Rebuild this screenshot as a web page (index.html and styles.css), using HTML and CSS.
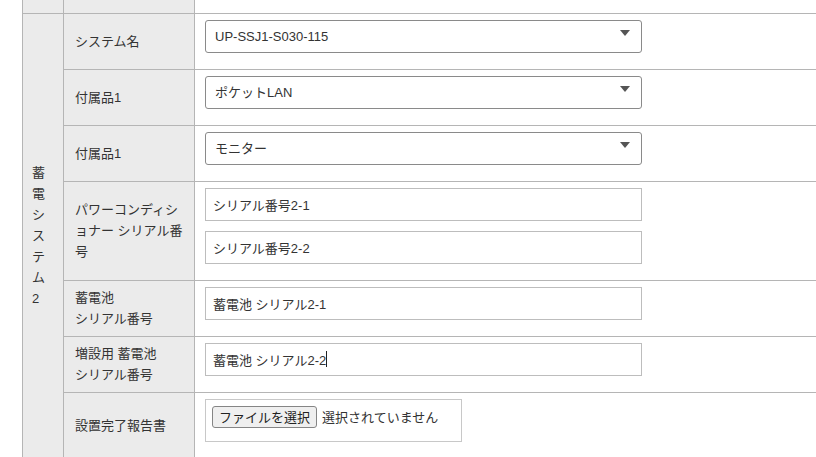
FILE: index.html
```html
<!DOCTYPE html>
<html lang="ja">
<head>
<meta charset="utf-8">
<title>蓄電システム2</title>
<link rel="stylesheet" href="styles.css">
</head>
<body>
<table class="form-table">
  <colgroup>
    <col class="c-group">
    <col class="c-label">
    <col class="c-field">
  </colgroup>
  <tbody>
    <tr class="row-top">
      <th class="group"></th>
      <th class="label"></th>
      <td class="field"></td>
    </tr>
    <tr>
      <th class="group" rowspan="7"><span class="vtext">蓄電システム2</span></th>
      <th class="label">システム名</th>
      <td class="field">
        <div class="select-wrap">
          <select class="select"><option>UP-SSJ1-S030-115</option></select>
          <span class="arrow"></span>
        </div>
      </td>
    </tr>
    <tr>
      <th class="label">付属品1</th>
      <td class="field">
        <div class="select-wrap">
          <select class="select"><option>ポケットLAN</option></select>
          <span class="arrow"></span>
        </div>
      </td>
    </tr>
    <tr>
      <th class="label">付属品1</th>
      <td class="field">
        <div class="select-wrap">
          <select class="select"><option>モニター</option></select>
          <span class="arrow"></span>
        </div>
      </td>
    </tr>
    <tr>
      <th class="label">パワーコンディショナー シリアル番号</th>
      <td class="field">
        <input class="text" type="text" value="シリアル番号2-1">
        <input class="text" type="text" value="シリアル番号2-2">
      </td>
    </tr>
    <tr>
      <th class="label">蓄電池<br>シリアル番号</th>
      <td class="field">
        <input class="text" type="text" value="蓄電池 シリアル2-1">
      </td>
    </tr>
    <tr>
      <th class="label">増設用 蓄電池<br>シリアル番号</th>
      <td class="field">
        <div class="text caret-box"><span>蓄電池 シリアル2-2</span><span class="caret"></span></div>
      </td>
    </tr>
    <tr>
      <th class="label">設置完了報告書</th>
      <td class="field">
        <div class="file-box">
          <button class="file-btn" type="button">ファイルを選択</button>
          <span class="file-name">選択されていません</span>
        </div>
      </td>
    </tr>
  </tbody>
</table>
</body>
</html>
```
FILE: styles.css
```css
html, body {
  margin: 0;
  padding: 0;
  background: #ffffff;
  overflow: hidden;
}
body {
  font-family: "Liberation Sans", "Noto Sans CJK JP", sans-serif;
  font-size: 13px;
  color: #333333;
}
.form-table {
  margin-left: 22px;
  border-collapse: collapse;
  table-layout: fixed;
  width: 830px;
}
.c-group { width: 41px; }
.c-label { width: 131px; }
.form-table th,
.form-table td {
  border: 1px solid #b5b5b5;
  padding: 6px 11px 6px 11px;
  text-align: left;
  font-weight: normal;
  vertical-align: middle;
}
.row-top th,
.row-top td {
  border-top: 0;
  height: 13px;
  padding: 0;
  box-sizing: border-box;
}
.group {
  background: #ebebeb;
  padding: 6px 4px 6px 9px !important;
  vertical-align: middle;
}
.vtext {
  display: block;
  width: 14px;
  word-break: break-all;
  font-size: 13px;
  line-height: 21px;
}
.label {
  background: #ebebeb;
  line-height: 21px;
  font-size: 13px;
}
.field {
  background: #ffffff;
  padding: 6px 10px 6px 10px !important;
}
.select-wrap {
  position: relative;
  width: 437px;
  margin-bottom: 10px;
}
.select {
  display: block;
  width: 437px;
  height: 33px;
  box-sizing: border-box;
  margin: 0;
  padding: 0 30px 0 9px;
  border: 1px solid #8a8a8a;
  border-radius: 3px;
  background: #ffffff;
  color: #333333;
  font-family: "Liberation Sans", "Noto Sans CJK JP", sans-serif;
  font-size: 13px;
  -webkit-appearance: none;
  appearance: none;
  outline: none;
}
.arrow {
  position: absolute;
  right: 12px;
  top: 10px;
  width: 0;
  height: 0;
  border-left: 5px solid transparent;
  border-right: 5px solid transparent;
  border-top: 6px solid #555555;
  pointer-events: none;
}
.text {
  display: block;
  width: 437px;
  height: 33px;
  box-sizing: border-box;
  margin: 0 0 10px 0;
  padding: 0 7px;
  border: 1px solid #bdbdbd;
  border-radius: 0;
  background: #ffffff;
  color: #333333;
  font-family: "Liberation Sans", "Noto Sans CJK JP", sans-serif;
  font-size: 13px;
  outline: none;
}
.caret-box {
  display: flex;
  align-items: center;
}
.caret {
  display: inline-block;
  width: 1px;
  height: 16px;
  background: #222222;
  margin-left: 0;
}
.file-box {
  display: flex;
  align-items: flex-start;
  width: 257px;
  height: 43px;
  box-sizing: border-box;
  border: 1px solid #c8c8c8;
  padding: 6px 6px;
  margin-bottom: 10px;
}
.file-btn {
  height: 22px;
  box-sizing: border-box;
  margin: 0;
  padding: 0 6px;
  border: 1px solid #858585;
  border-radius: 3px;
  background: #efefef;
  color: #222222;
  font-family: "Noto Sans CJK JP", sans-serif;
  font-size: 13px;
  line-height: 20px;
}
.file-name {
  margin-left: 5px;
  line-height: 22px;
  font-family: "Noto Sans CJK JP", sans-serif;
  font-size: 13px;
  color: #333333;
}
```
